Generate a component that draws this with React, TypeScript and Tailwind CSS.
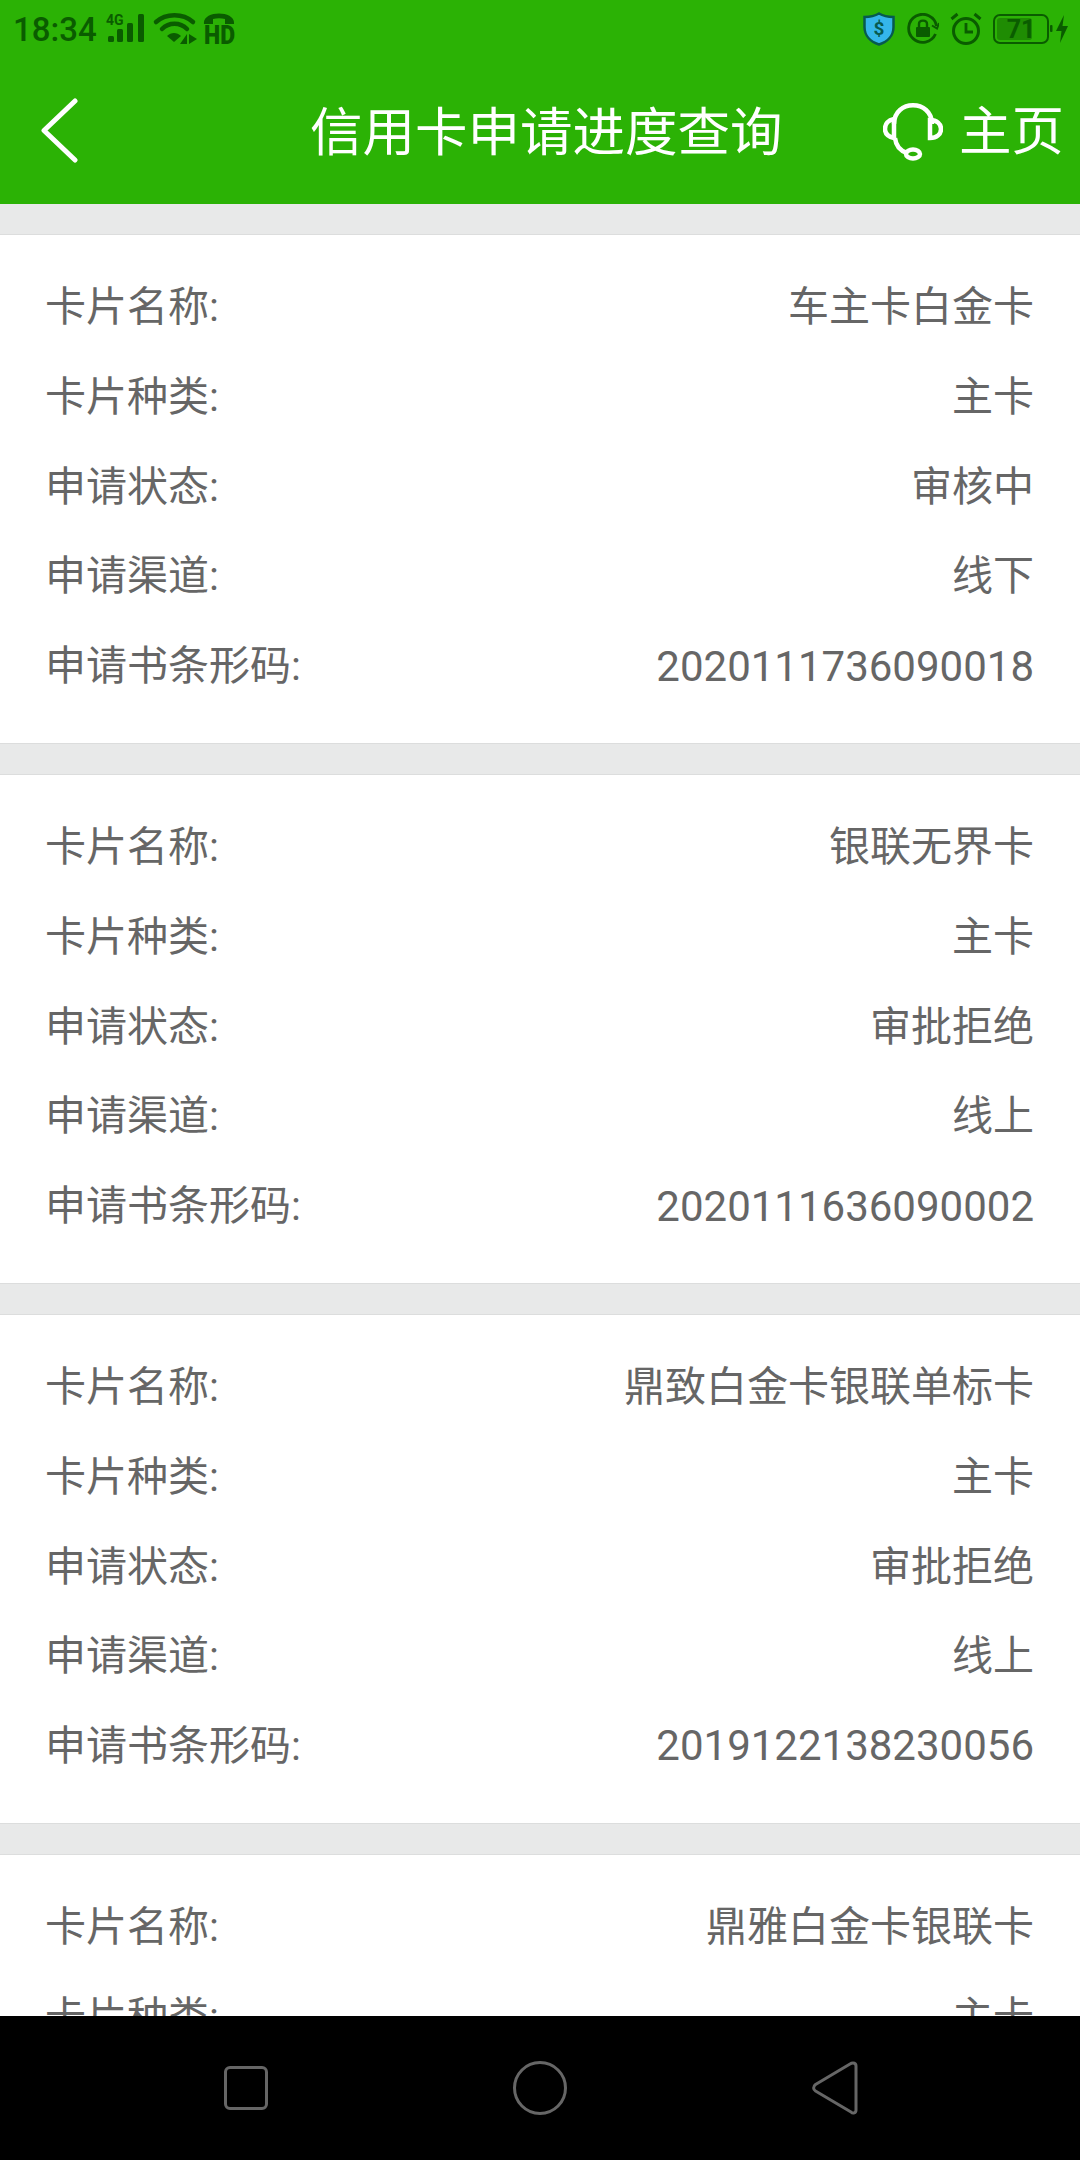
import React from 'react';

const FONT = "font-['Roboto','Noto_Sans_CJK_SC',sans-serif]";

interface CardInfo {
  name: string;
  type: string;
  status: string;
  channel: string;
  barcode: string;
}

const cards: CardInfo[] = [
  { name: '车主卡白金卡', type: '主卡', status: '审核中', channel: '线下', barcode: '2020111736090018' },
  { name: '银联无界卡', type: '主卡', status: '审批拒绝', channel: '线上', barcode: '2020111636090002' },
  { name: '鼎致白金卡银联单标卡', type: '主卡', status: '审批拒绝', channel: '线上', barcode: '2019122138230056' },
  { name: '鼎雅白金卡银联卡', type: '主卡', status: '审批拒绝', channel: '线上', barcode: '2019122138230055' },
];

const Row: React.FC<{ label: string; value: string; mono?: boolean }> = ({ label, value, mono }) => (
  <div className="flex h-[89.7px] items-center justify-between text-[41px] leading-none text-[#666666]">
    <span>{label}</span>
    {mono ? <span className="text-[42px]">{value}</span> : <span>{value}</span>}
  </div>
);

const Card: React.FC<{ card: CardInfo }> = ({ card }) => (
  <div className="shrink-0 border-y border-[#dcdddd] bg-white pt-[28px] pr-[46px] pb-[31.5px] pl-[45px]">
    <Row label="卡片名称:" value={card.name} />
    <Row label="卡片种类:" value={card.type} />
    <Row label="申请状态:" value={card.status} />
    <Row label="申请渠道:" value={card.channel} />
    <Row label="申请书条形码:" value={card.barcode} mono />
  </div>
);

const StatusLeftIcons = () => (
  <svg width="132" height="40" viewBox="0 0 132 40" fill="#0a5c00" className="mt-[4px] ml-[8px]">
    {/* signal */}
    <text x="1" y="14" fontSize="14" fontWeight="700" fontFamily="Roboto, sans-serif">4G</text>
    <rect x="3" y="25" width="6" height="6" rx="1.5" />
    <rect x="12" y="18" width="6" height="13" rx="1.5" />
    <rect x="22" y="12" width="6" height="19" rx="1.5" />
    <rect x="33" y="3" width="6" height="28" rx="1.5" />
    {/* wifi */}
    <path d="M51 11 C61 2 78 2 88 11" fill="none" stroke="#0a5c00" strokeWidth="4.500" strokeLinecap="round" />
    <path d="M57 18 C64 11 75 11 82 18" fill="none" stroke="#0a5c00" strokeWidth="4.500" strokeLinecap="round" />
    <path d="M69 31 L62 25 C66 21 72 21 76 25 Z" />
    <path d="M75 33 L82 23 L82 33 Z M84 23 L92 28 L84 33 Z" />
    {/* HD */}
    <path d="M99 13 C97 -1 131 -1 129 13 L120 13 L120 8 C116 7 112 7 108 8 L108 13 Z" />
    <text x="99" y="33" fontSize="25" fontWeight="900" fontFamily="Roboto, sans-serif" textLength="31" lengthAdjust="spacingAndGlyphs">HD</text>
  </svg>
);

const StatusRightIcons = () => (
  <div className="flex items-center">
    <svg width="32" height="34" viewBox="0 0 32 34">
      <path d="M16 1.500 C21 4.500 26 5 30.500 5 L30.500 15 C30.500 24 24 30 16 32.500 C8 30 1.500 24 1.500 15 L1.500 5 C6 5 11 4.500 16 1.500 Z" fill="#35b6ea" stroke="#075a50" strokeWidth="2.500" />
      <text x="16" y="23" textAnchor="middle" fontSize="19" fontWeight="700" fill="#075a50" fontFamily="Roboto, sans-serif">$</text>
    </svg>
    <svg width="32" height="32" viewBox="0 0 32 32" className="ml-[12px]" fill="none" stroke="#0a5c00" strokeWidth="2.800">
      <path d="M28.500 21 A14 14 0 1 1 29.500 13" />
      <path d="M25 12.500 L30 15.500 L32 10" strokeWidth="2" />
      <rect x="9" y="14" width="14" height="10" rx="1" fill="#0a5c00" stroke="none" />
      <path d="M12 14 V11 C12 6.500 20 6.500 20 11 V14" strokeWidth="2.400" />
    </svg>
    <svg width="32" height="34" viewBox="0 0 32 34" className="ml-[11px]" fill="none" stroke="#0a5c00" strokeWidth="3">
      <circle cx="16" cy="19" r="12.500" />
      <path d="M16 11 V20 H23" strokeWidth="2.800" />
      <path d="M1.500 7 L7.500 2 M30.500 7 L24.500 2" strokeWidth="3" />
    </svg>
    <div className="relative ml-[11px] flex h-[30px] w-[56px] items-center overflow-hidden rounded-[7px] border-[2.5px] border-[#0a5c00]">
      <div className="absolute inset-y-[2px] left-[2px] w-[35px] rounded-[3px] bg-[#1f8c03]" />
      <span className="relative w-full text-center font-['Roboto',sans-serif] text-[25px] leading-none font-bold text-[#0a5c00]">71</span>
    </div>
    <svg width="20" height="30" viewBox="0 0 20 30" className="ml-[1px]" fill="#0a5c00">
      <rect x="0" y="11" width="2.500" height="7" rx="1" />
      <path d="M14 1 L6 17 L11.500 17 L10 29 L18 12 L12.500 12 Z" />
    </svg>
  </div>
);

const BackIcon = () => (
  <svg width="44" height="68" viewBox="0 0 44 68" fill="none" stroke="#ffffff" strokeWidth="5" strokeLinecap="round" strokeLinejoin="round">
    <path d="M34 4 L3 33.500 L34 63" />
  </svg>
);

const HeadsetIcon = () => (
  <svg width="60" height="60" viewBox="0 0 60 60" fill="none" stroke="#ffffff" strokeWidth="4.500">
    <path d="M11 23 C11 -2 49 -2 49 23" />
    <path d="M11 18 C5 19 2 23 2 28 C2 33 6 36 11 37 Z" />
    <path d="M47 19 C54 19 58 23 58 28 C58 33 54 37 47 37 Z" />
    <path d="M12 37 C13 46 18 50 24 52" />
    <ellipse cx="30" cy="53" rx="7" ry="4.500" />
  </svg>
);

const Header = () => (
  <div className={`flex h-[204px] shrink-0 flex-col bg-[#2bb205] ${FONT}`}>
    <div className="flex h-[56px] items-center justify-between pt-[2px] pr-[10px] pl-[13px]">
      <div className="flex items-center">
        <span className="text-[33px] leading-none font-medium text-[#0a5c00]">18:34</span>
        <StatusLeftIcons />
      </div>
      <StatusRightIcons />
    </div>
    <div className="flex flex-1 items-center pt-[2px] pr-[16px] pl-[41px]">
      <BackIcon />
      <span className="mt-[4px] ml-[225px] text-[52.5px] leading-none text-white">信用卡申请进度查询</span>
      <div className="ml-auto flex items-center gap-[16px]">
        <HeadsetIcon />
        <span className="mt-[3px] text-[52.5px] leading-none text-white">主页</span>
      </div>
    </div>
  </div>
);

const NavBar = () => (
  <div className="flex h-[144px] shrink-0 items-center bg-black pl-[224px]">
    <div className="h-[44px] w-[44px] rounded-[6px] border-[3px] border-[#666666]" />
    <div className="ml-[245px] h-[54px] w-[54px] rounded-full border-[3px] border-[#666666]" />
    <svg width="46" height="54" viewBox="0 0 46 54" fill="none" stroke="#666666" strokeWidth="3" className="ml-[245px]">
      <path d="M41 2 C43 2 44 3 44 5 L44 49 C44 52 41 53 39 51 L3.500 30 C1 28.500 1 25.500 3.500 23.500 L38 3 C39 2.300 40 2 41 2 Z" strokeLinejoin="round" />
    </svg>
  </div>
);

export default function App() {
  return (
    <div className={`flex h-[2160px] w-[1080px] flex-col overflow-hidden bg-[#e8e9e9] ${FONT}`}>
      <Header />
      <div className="flex min-h-0 flex-1 flex-col gap-[30px] overflow-hidden pt-[30px]">
        {cards.map((card) => (
          <Card key={card.barcode} card={card} />
        ))}
      </div>
      <NavBar />
    </div>
  );
}
